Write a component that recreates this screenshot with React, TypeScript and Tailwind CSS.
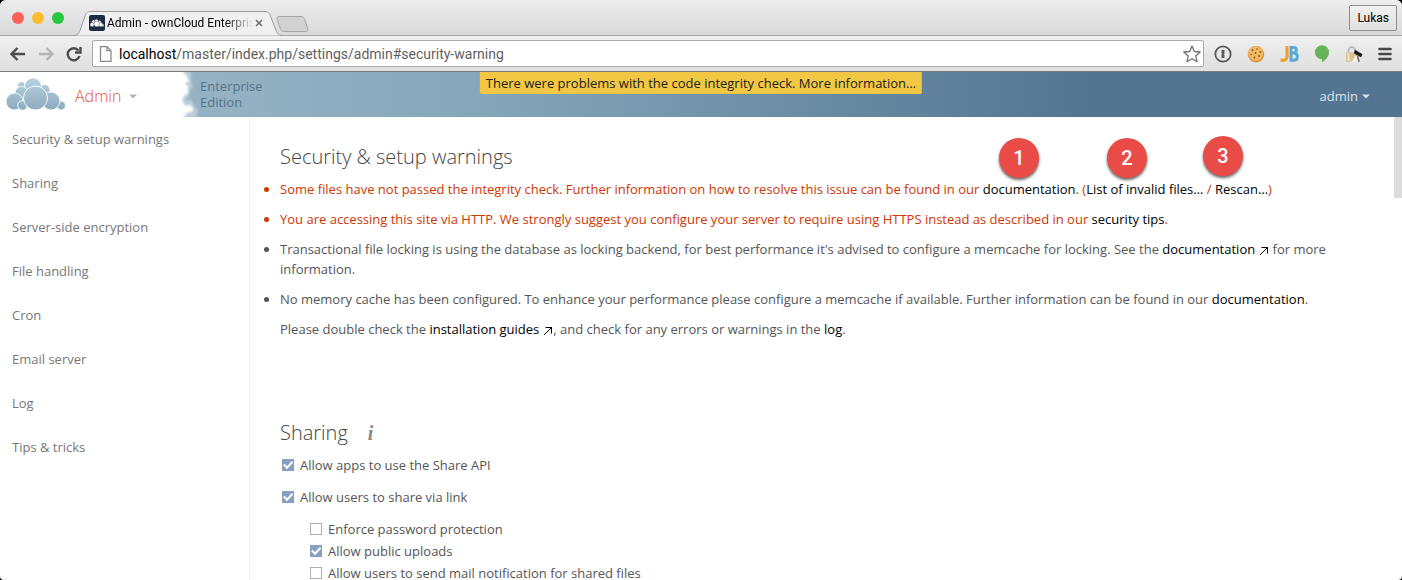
import type { ReactNode } from "react";

const navItems = [
  "Security & setup warnings",
  "Sharing",
  "Server-side encryption",
  "File handling",
  "Cron",
  "Email server",
  "Log",
  "Tips & tricks",
];

function NavIcon({ d, label, dim = false }: { d: string; label: string; dim?: boolean }) {
  return (
    <button type="button" aria-label={label} className={dim ? "text-[#b4b4b4]" : "text-[#4c4c4c]"}>
      <svg width="16" height="16" viewBox="0 0 16 16" fill="none" stroke="currentColor" strokeWidth="2.4">
        <path d={d} />
      </svg>
    </button>
  );
}

function Clouds({ className, stroke }: { className: string; stroke: string }) {
  return (
    <svg className={className} viewBox="0 0 60 32" stroke={stroke} strokeWidth="0.9" fill="url(#cloudFill)">
      <defs>
        <linearGradient id="cloudFill" x1="0" y1="0" x2="0" y2="32" gradientUnits="userSpaceOnUse">
          <stop offset="0" stopColor="#b9d2e1" />
          <stop offset="1" stopColor="#8cabbd" />
        </linearGradient>
      </defs>
      <circle cx="15.500" cy="7.500" r="4" />
      <circle cx="38.500" cy="12" r="5.500" />
      <circle cx="27" cy="8.500" r="8.500" />
      <circle cx="15.500" cy="15" r="6.500" />
      <circle cx="8.500" cy="23.500" r="8.500" />
      <circle cx="55" cy="27.500" r="4.500" />
      <circle cx="45" cy="23" r="9" />
      <circle cx="16.500" cy="27.500" r="4.800" />
      <circle cx="29.500" cy="20" r="12" />
    </svg>
  );
}

function Caret({ className }: { className: string }) {
  return (
    <svg className={className} width="8" height="5" viewBox="0 0 8 5" fill="currentColor" aria-hidden="true">
      <path d="M0 0.500h8L4 4.500z" />
    </svg>
  );
}

function BrowserTab() {
  return (
    <div className="relative flex h-6 w-[210px] items-center pr-4 pl-[15px]">
      <svg className="absolute inset-0" width="210" height="25" viewBox="0 0 210 25" aria-hidden="true">
        <path
          d="M0 24.500C4 24.500 5 22 6 19.500L11 5C12.500 1 14 0.500 17 0.500H190C193 0.500 195 1 196.500 5L202 19.500C203 22 204 24.500 208 24.500"
          fill="#f0f0f0"
          stroke="#9d9d9d"
        />
      </svg>
      <span className="relative flex size-4 shrink-0 items-center justify-center rounded-xs bg-[#1d2d44]">
        <svg width="14" height="8" viewBox="0 0 60 32" fill="#fff" stroke="#1d2d44" strokeWidth="1.500" aria-hidden="true">
          <circle cx="15" cy="11" r="8" />
          <circle cx="40" cy="13" r="8" />
          <circle cx="27" cy="9" r="9" />
          <circle cx="9" cy="23" r="9" />
          <circle cx="54" cy="26" r="6" />
          <circle cx="46" cy="23" r="9" />
          <circle cx="29" cy="20" r="12" />
        </svg>
      </span>
      <span className="relative ml-0.5 w-[146px] overflow-hidden bg-linear-to-r from-black from-80% to-transparent bg-clip-text font-[Roboto,sans-serif] text-xs whitespace-nowrap text-transparent">
        Admin - ownCloud Enterprise
      </span>
      <button type="button" aria-label="Close tab" className="relative ml-0.5 text-[#6d6d6d]">
        <svg width="8" height="8" viewBox="0 0 8 8" stroke="currentColor" strokeWidth="1.500">
          <path d="M1 1l6 6M7 1l-6 6" />
        </svg>
      </button>
    </div>
  );
}

function Extensions() {
  return (
    <div className="flex items-center gap-[15px]">
      <button type="button" aria-label="Password manager">
        <svg width="18" height="18" viewBox="0 0 18 18">
          <circle cx="9" cy="9" r="7.700" fill="#e8e8e8" stroke="#5a5a5a" strokeWidth="1.800" />
          <path d="M7.500 5h3v3.600l-.7.700.7.700V13h-3V9.400l.7-.7-.7-.7z" fill="#5a5a5a" />
        </svg>
      </button>
      <button type="button" aria-label="Cookies">
        <svg width="18" height="18" viewBox="0 0 18 18">
          <circle cx="9" cy="9.300" r="8.200" fill="#d98a35" />
          <circle cx="8.800" cy="8.500" r="7.600" fill="#f2b863" />
          <g fill="#8f5524">
            <circle cx="5.500" cy="5" r="0.900" />
            <circle cx="10" cy="4" r="0.800" />
            <circle cx="13.500" cy="7" r="0.900" />
            <circle cx="8.500" cy="8" r="0.900" />
            <circle cx="4" cy="9.500" r="0.800" />
            <circle cx="12" cy="11" r="1" />
            <circle cx="7.500" cy="12.500" r="0.900" />
          </g>
        </svg>
      </button>
      <button type="button" aria-label="JetBrains">
        <svg width="19" height="18" viewBox="0 0 19 18" fill="none">
          <path d="M7 1v10.500c0 3-2 4.300-6.500 3.700" stroke="#f0a02c" strokeWidth="3.200" />
          <path
            d="M11 2.400h2.500c3.800 0 3.800 5.600 0 5.600H11h3c4.500.3 4.500 7 0 7.200H11z"
            stroke="#57a9d8"
            strokeWidth="2.900"
          />
        </svg>
      </button>
      <button type="button" aria-label="Hangouts">
        <svg width="16" height="18" viewBox="0 0 16 18">
          <path d="M8 .3a7 7 0 0 1 7 7c0 4.500-3.500 8-7 10v-3A7 7 0 0 1 8 .3z" fill="#65b558" />
        </svg>
      </button>
      <button type="button" aria-label="Site security">
        <svg width="18" height="18" viewBox="0 0 18 18">
          <path d="M3.500 8V5.500a3.300 3.300 0 0 1 6.600 0V8" fill="none" stroke="#b8b8b8" strokeWidth="1.700" />
          <path d="M1 7.500h11v8.500H7l-2 1H1z" fill="#dcc192" />
          <path d="M3.500 8v8" stroke="#f2e4c6" strokeWidth="2" />
          <path d="M7 17l3-6 2 0 4 6z" fill="#f4f4f4" />
          <path d="M10 4.800l7.500 4.500-1.500 3L8.800 8.300z" fill="#191919" />
          <path d="M12.500 10.500l1.500 6.500" stroke="#7a6a55" strokeWidth="1.600" />
        </svg>
      </button>
      <button type="button" aria-label="Browser menu">
        <svg width="14" height="14" viewBox="0 0 14 14" stroke="#474747" strokeWidth="2.600" strokeLinecap="round">
          <path d="M1.500 2h11M1.500 7h11M1.500 12h11" />
        </svg>
      </button>
    </div>
  );
}

function BrowserChrome() {
  return (
    <header className="shrink-0 rounded-t-md border-b border-[#7b7b7b] bg-[#ececec] font-[Roboto,sans-serif]">
      <div className="flex h-9 items-end rounded-t-md border-b border-[#a5a5a5] bg-linear-to-b from-[#ededed] to-[#d9d9d9] pr-[5px] pl-3">
        <div className="flex gap-2 self-center">
          <span className="size-3 rounded-full bg-[#fc605b]" />
          <span className="size-3 rounded-full bg-[#fdbc2e]" />
          <span className="size-3 rounded-full bg-[#27c83f]" />
        </div>
        <div className="ml-2.5">
          <BrowserTab />
        </div>
        <button type="button" aria-label="New tab" className="-ml-2 mb-0.5">
          <svg width="33" height="18" viewBox="0 0 33 18">
            <path
              d="M3 1.500h22c2 0 3 1 3.700 3l3 9c.6 2-.2 3-2 3H8c-2 0-3-1-3.700-3l-3-9c-.6-2 0-3 1.700-3z"
              fill="#d2d2d2"
              stroke="#a6a6a6"
            />
          </svg>
        </button>
        <button
          type="button"
          className="mb-1 ml-auto h-[26px] rounded-xs border border-[#8f8f8f] bg-linear-to-b from-[#f0f0f0] to-[#e0e0e0] px-[7px] text-xs text-black"
        >
          Lukas
        </button>
      </div>
      <div className="flex h-[35px] items-center bg-linear-to-b from-[#f0f0f0] to-[#dfdfdf] px-2.5">
        <div className="flex gap-3">
          <NavIcon label="Back" d="M15 8H2M7.500 2L1.500 8l6 6" />
          <NavIcon label="Forward" dim d="M1 8h13M8.500 2l6 6-6 6" />
          <NavIcon label="Reload" d="M13.500 10a6 6 0 1 1-1-5.500M14.500 1v5.500H9" />
        </div>
        <div className="ml-2.5 flex h-[27px] flex-1 items-center rounded-xs border border-[#a9a9a9] bg-white px-1">
          <svg className="ml-0.5 shrink-0" width="14" height="16" viewBox="0 0 14 16" aria-hidden="true">
            <path d="M1.500.700h6.500l4 4v10.600h-10.500zM8 .700v4h4" fill="#fff" stroke="#8b8b8b" strokeWidth="1.300" />
          </svg>
          <div className="ml-1.5 flex-1 text-sm whitespace-nowrap text-[#5f5f5f]">
            <span className="text-black">localhost</span>/master/index.php/settings/admin#security-warning
          </div>
          <button type="button" aria-label="Bookmark this page" className="-mr-0.5">
            <svg width="18" height="18" viewBox="0 0 18 18" fill="#fff" stroke="#707070" strokeWidth="1.300" strokeLinejoin="round">
              <path d="M9 1l2.300 5.500 5.900.5-4.500 3.900 1.400 5.900L9 13.700l-5.100 3.100 1.400-5.900L.8 7l5.900-.5z" />
            </svg>
          </button>
        </div>
        <div className="ml-2.5">
          <Extensions />
        </div>
      </div>
    </header>
  );
}

function AppHeader() {
  return (
    <div className="relative flex h-[45px] shrink-0 bg-linear-to-r from-[#a0bccb] via-[#85a5b9] via-35% to-[#537591] to-78%">
      <svg className="absolute inset-y-0 left-0" width="210" height="45" viewBox="0 0 210 45" aria-hidden="true">
        <defs>
          <filter id="mist" filterUnits="userSpaceOnUse" x="-40" y="-40" width="260" height="130">
            <feTurbulence type="fractalNoise" baseFrequency="0.18" numOctaves="3" seed="7" />
            <feDisplacementMap in="SourceGraphic" scale="8" xChannelSelector="R" yChannelSelector="G" />
            <feGaussianBlur stdDeviation="1" />
          </filter>
        </defs>
        <g filter="url(#mist)" fill="#fff">
          <path d="M-30-30H187L191 4l-2 6 3 5-2 8-4 4 6 4 5 6-1 10 2 30H-30z" opacity="0.35" />
          <path d="M-30-30H180L185 2l3 8-1 5 2 4-5 5-2 5 6 4 6 4-5 6-6 2-3 30H-30z" />
        </g>
        <path d="M0 0h160v45H0z" fill="#fff" />
      </svg>
      <a href="#home" aria-label="ownCloud home" className="relative mt-1.5 ml-1.5">
        <Clouds className="h-8 w-[60px]" stroke="#fff" />
      </a>
      <button type="button" className="relative ml-[9px] flex w-[125px] items-center text-base font-light text-[#e2543b]">
        <span className="mt-0.5">Admin</span>
        <Caret className="mt-1 ml-2 text-[#b3b3b3]" />
      </button>
      <div className="pt-1.5 text-[13px] leading-4 text-[#54758c]">
        Enterprise
        <br />
        Edition
      </div>
      <a
        href="#integrity"
        className="absolute top-0 left-1/2 -translate-x-1/2 rounded-b-xs bg-[#f1c743] px-1.5 py-px text-[13px] leading-5 whitespace-nowrap text-[#222]"
      >
        There were problems with the code integrity check. More information…
      </a>
      <button type="button" className="mr-8 ml-auto flex items-center gap-1 pt-0.5 text-[13px] text-[#dbe4ea]">
        admin
        <Caret className="mt-0.5" />
      </button>
    </div>
  );
}

function DocLink({ children, external = false }: { children: ReactNode; external?: boolean }) {
  return (
    <a href="#docs" className="text-black">
      {children}
      {external && (
        <svg className="ml-1 inline" width="10" height="10" viewBox="0 0 10 10" fill="none" stroke="#000" strokeWidth="1" aria-hidden="true">
          <path d="M1 9l8-8M2.500 1.500h6V7.500" />
        </svg>
      )}
    </a>
  );
}

function CheckOption({ label, checked = false }: { label: string; checked?: boolean }) {
  return (
    <label className="flex items-center gap-1.5">
      <span className="grid size-3">
        <input
          type="checkbox"
          defaultChecked={checked}
          className="peer col-start-1 row-start-1 size-3 appearance-none border border-[#b0b0b0] bg-white checked:border-[#8aa0c0] checked:bg-[#8aa0c0]"
        />
        <svg
          className="pointer-events-none col-start-1 row-start-1 opacity-0 peer-checked:opacity-100"
          width="12"
          height="12"
          viewBox="0 0 12 12"
          fill="none"
          stroke="#fff"
          strokeWidth="2"
          aria-hidden="true"
        >
          <path d="M1.800 5.500L5 8.700l5.500-5.900" />
        </svg>
      </span>
      {label}
    </label>
  );
}

function Badge({ n, place }: { n: number; place: string }) {
  return (
    <span
      className={`absolute flex size-10 items-center justify-center rounded-full bg-[#e94b46] font-[Roboto,sans-serif] text-xl font-medium text-white shadow-[0_2px_3px_rgba(0,0,0,0.6)] ${place}`}
    >
      {n}
    </span>
  );
}

function Warnings() {
  return (
    <section className="relative">
      <h2 className="text-xl leading-7 font-light text-[#444]">Security &amp; setup warnings</h2>
      <Badge n={1} place="left-[719px] -top-[5px]" />
      <Badge n={2} place="left-[827px] -top-[5px]" />
      <Badge n={3} place="left-[923px] -top-[7px]" />
      <ul className="mt-2 flex list-disc flex-col gap-2.5">
        <li className="text-[#ce3702]">
          Some files have not passed the integrity check. Further information on how to resolve this issue can be found in our{" "}
          <DocLink>documentation</DocLink>. (<DocLink>List of invalid files…</DocLink> / <DocLink>Rescan…</DocLink>)
        </li>
        <li className="text-[#ce3702]">
          You are accessing this site via HTTP. We strongly suggest you configure your server to require using HTTPS instead as
          described in our <DocLink>security tips</DocLink>.
        </li>
        <li>
          Transactional file locking is using the database as locking backend, for best performance it's advised to configure a
          memcache for locking. See the <DocLink external>documentation</DocLink> for more information.
        </li>
        <li>
          No memory cache has been configured. To enhance your performance please configure a memcache if available. Further
          information can be found in our <DocLink>documentation</DocLink>.
        </li>
      </ul>
      <p className="mt-2.5">
        Please double check the <DocLink external>installation guides</DocLink>, and check for any errors or warnings in the{" "}
        <DocLink>log</DocLink>.
      </p>
    </section>
  );
}

function Sharing() {
  return (
    <section className="mt-20">
      <div className="flex items-center gap-5">
        <h2 className="text-xl leading-7 font-light text-[#444]">Sharing</h2>
        <a href="#sharing-help" aria-label="Sharing documentation" className="font-['Liberation_Serif',serif] text-xl leading-7 font-bold text-[#888] italic">
          i
        </a>
      </div>
      <div className="mt-2 flex flex-col gap-3 pl-0.5">
        <CheckOption label="Allow apps to use the Share API" checked />
        <CheckOption label="Allow users to share via link" checked />
        <div className="flex flex-col gap-0.5 pl-7">
          <CheckOption label="Enforce password protection" />
          <CheckOption label="Allow public uploads" checked />
          <CheckOption label="Allow users to send mail notification for shared files" />
        </div>
      </div>
    </section>
  );
}

export default function App() {
  return (
    <div className="flex h-screen flex-col overflow-hidden bg-black font-['Open_Sans',sans-serif] text-[13px] leading-5 text-[#555]">
      <BrowserChrome />
      <AppHeader />
      <div className="flex min-h-0 flex-1 overflow-hidden rounded-b-sm bg-white">
        <nav className="w-[250px] shrink-0 border-r border-[#eee]">
          <ul>
            {navItems.map((item) => (
              <li key={item}>
                <a href="#section" className="block px-3 py-3 text-[#777]">
                  {item}
                </a>
              </li>
            ))}
          </ul>
        </nav>
        <main className="min-w-0 flex-1 overflow-hidden pt-[26px] pr-16 pl-[30px]">
          <Warnings />
          <Sharing />
        </main>
        <div className="w-2 shrink-0">
          <div className="h-[81px] bg-[#dcdcdc]" />
        </div>
      </div>
    </div>
  );
}
